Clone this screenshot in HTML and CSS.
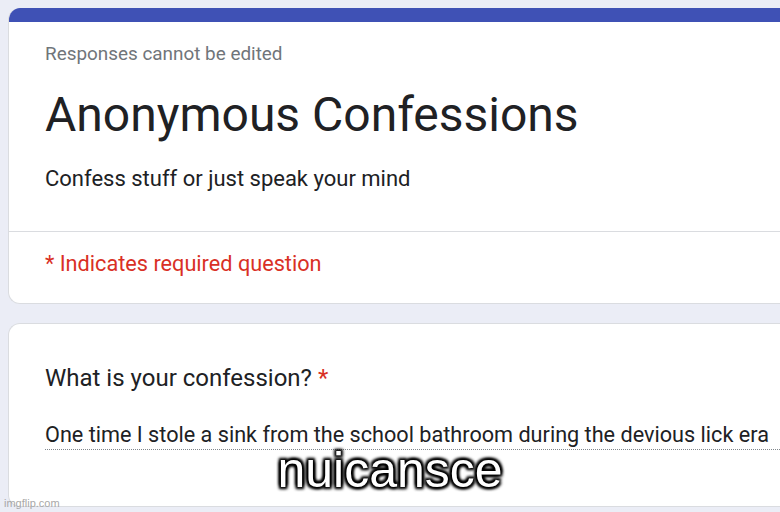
FILE: index.html
```html
<!DOCTYPE html>
<html>
<head>
<meta charset="utf-8">
<link rel="stylesheet" href="styles.css">
</head>
<body>
<div class="page">
  <div class="card header-card">
    <div class="band"></div>
    <div class="head-body">
      <div class="note">Responses cannot be edited</div>
      <h1 class="title">Anonymous Confessions</h1>
      <div class="desc">Confess stuff or just speak your mind</div>
    </div>
    <div class="divider"></div>
    <div class="required">* Indicates required question</div>
  </div>
  <div class="card question-card">
    <div class="question">What is your confession? <span class="star">*</span></div>
    <div class="answer">One time I stole a sink from the school bathroom during the devious lick era</div>
  </div>
</div>
<div class="meme">nuicansce</div>
<div class="watermark">imgflip.com</div>
</body>
</html>
```
FILE: styles.css
```css
html, body {
  margin: 0;
  padding: 0;
  background: #ebedf6;
  width: 780px;
  height: 512px;
  overflow: hidden;
  font-family: Roboto, "Liberation Sans", sans-serif;
}
.page {
  padding: 8px 0 0 8px;
  display: flex;
  flex-direction: column;
  gap: 19px;
}
.card {
  background: #fff;
  border: 1px solid #dadce0;
  border-right: none;
  border-radius: 12px 0 0 12px;
  box-sizing: border-box;
}
.header-card {
  height: 296px;
  overflow: hidden;
  border-top: none;
}
.band {
  height: 14px;
  background: #3f51b5;
}
.head-body {
  padding: 21px 0 0 36px;
}
.note {
  font-size: 18.9px;
  color: #70757a;
  line-height: 22px;
}
.title {
  margin: 22px 0 0 0;
  font-weight: 400;
  font-size: 48px;
  line-height: 56px;
  color: #202124;
}
.desc {
  margin-top: 23px;
  font-size: 22px;
  line-height: 26px;
  color: #202124;
}
.divider {
  margin-top: 39px;
  height: 1px;
  background: #dadce0;
}
.required {
  padding: 19px 0 0 36px;
  font-size: 21.7px;
  line-height: 26px;
  color: #d93025;
}
.question-card {
  height: 184px;
  padding: 40px 0 0 36px;
}
.question {
  font-size: 24px;
  line-height: 28px;
  color: #202124;
}
.star {
  color: #d93025;
}
.answer {
  margin-top: 30px;
  font-size: 21.65px;
  line-height: 26px;
  color: #202124;
  border-bottom: 1px dotted #80868b;
  padding-bottom: 1px;
  white-space: nowrap;
}
.meme {
  position: absolute;
  left: 0;
  top: 440px;
  width: 780px;
  text-align: center;
  font-family: "Liberation Sans", Arial, sans-serif;
  font-size: 50px;
  line-height: 60px;
  color: #fff;
  text-shadow: 0 0 2px #000, 0 0 3px #000, 0 0 4px #000, 2px 2px 3px #000, -2px -2px 3px #000, 2px -2px 3px #000, -2px 2px 3px #000;
}
.watermark {
  position: absolute;
  left: 4px;
  top: 497px;
  font-family: "Liberation Sans", Arial, sans-serif;
  font-size: 11px;
  color: #a0a0a0;
  opacity: 0.9;
}
```
